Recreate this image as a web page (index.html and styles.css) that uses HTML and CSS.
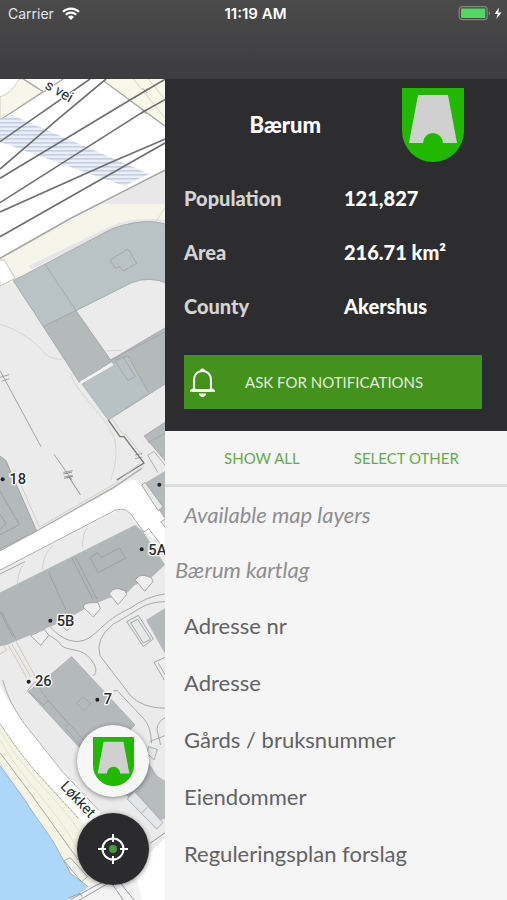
FILE: index.html
```html
<!DOCTYPE html>
<html lang="en">
<head>
<meta charset="utf-8">
<meta name="viewport" content="width=device-width, initial-scale=1">
<title>Bærum</title>
<link rel="stylesheet" href="styles.css">
</head>
<body>
<svg class="defs" aria-hidden="true">
  <symbol id="crest" viewBox="0 0 62 74">
    <path fill="#20b900" d="M0 0H62V43A31 31 0 0 1 0 43Z"/>
    <path fill="#d0d0d1" d="M16 7H46L55 55H41A10 10 0 0 0 21 55H7Z"/>
  </symbol>
</svg>
<div class="app">
  <header class="topbar">
    <div class="status">
      <div class="status-left">
        <span>Carrier</span>
        <svg class="wifi" viewBox="0 0 18 13" aria-hidden="true">
          <g fill="none" stroke="#fff" stroke-width="2.2">
            <path d="M1 4.8A11.5 11.5 0 0 1 17 4.8"/>
            <path d="M3.8 7.8A7.5 7.5 0 0 1 14.2 7.8"/>
          </g>
          <path fill="#fff" d="M9 13L6 10A4.4 4.4 0 0 1 12 10Z"/>
        </svg>
      </div>
      <time class="clock">11:19 AM</time>
      <div class="status-right">
        <svg class="battery" viewBox="0 0 44 15" aria-hidden="true">
          <rect x=".7" y=".7" width="28" height="13" rx="3" fill="none" stroke="#858587" stroke-width="1.2"/>
          <rect x="2.5" y="2.5" width="24.4" height="9.4" rx="1" fill="#4fd964"/>
          <path d="M30.3 5v4.500q1.500-.6 1.500-2.200T30.300 5Z" fill="#858587"/>
          <path d="M40.500 1.500L36 8h3.200l-1.400 5L43 6.500h-3.300Z" fill="#fff"/>
        </svg>
      </div>
    </div>
  </header>
  <main class="content">
    <section class="map" aria-label="Map">
      <svg class="map-canvas" viewBox="0 0 495 2463" preserveAspectRatio="xMinYMin slice">
        <defs>
          <pattern id="hatch" width="12" height="12" patternUnits="userSpaceOnUse">
            <rect width="12" height="12" fill="#eaeef6"/>
            <rect width="12" height="5" fill="#c3d0e8"/>
          </pattern>
        </defs>
        <rect width="600" height="2500" fill="#ebebeb"/>

        <!-- railway -->
        <g transform="translate(0 -27)" fill="none" stroke-width="2">
          <path fill="#fff" d="M0 0H500V298L0 565Z"/>
          <path fill="#f6f6ea" stroke="#b9b9ac" d="M0 80Q30 75 58 27L70 27L128 64L0 150Z"/>
          <path fill="#f8f8e9" d="M312 34L320 20H500V172Z"/>
          <path stroke="#a9aaa3" stroke-width="4" d="M70 27L128 64M0 150L190 27M312 34L500 172"/>
          <path stroke="#c4c4b8" d="M400 27L500 150M440 20L500 95"/>
          <path fill="url(#hatch)" d="M0 147L36 135L448 312L372 348L0 216Z"/>
          <path stroke="#6e6f70" stroke-width="5" d="M0 215L270 27M0 297L180 142L318 27M0 325L385 93L500 25M0 398L430 125L500 86M0 426L330 278L500 205M0 500L500 216"/>
          <path fill="#e8e8e9" d="M500 300L300 408H500Z"/>
          <path fill="#f5f5e9" d="M0 567L310 403H500V470L340 478L60 625L30 640L0 570Z"/>
          <path stroke="#e4e5e8" stroke-width="12" d="M90 592L335 474Q400 446 500 456"/>
          <path stroke="#a5a6a5" stroke-width="5" d="M0 565L210 446L500 298"/>
          <path stroke="#cacabf" d="M468 455L500 405"/>
          <g stroke="#666" stroke-width="2"><path d="M428 55l14 14m-14 0l14-14M425 118l14 14m-14 0l14-14"/></g>
          <text class="map-street" transform="translate(132 54) rotate(30)">s vei</text>
        </g>

        <!-- quarter south of the railway -->
        <g transform="translate(0 543)" fill="none" stroke="#a0a3a4" stroke-width="2.500">
          <path fill="#fff" stroke="#b5b5ad" d="M-5 0H13L45 55L0 78Z"/>
          <path fill="#b9c2c5" d="M40 62L335 -93Q400 -118 460 -115L505 -106V72Q450 46 395 68L228 152L130 200Z"/>
          <path fill="#b4b9ba" d="M130 200L228 152L332 300L505 198V366L325 480L246 372L340 314L334 305L238 367Z"/>
          <path fill="#b8c1c4" stroke="none" d="M348 304L385 288L444 396L325 480L246 372Z"/>
          <path stroke="#f3f3f3" stroke-width="8" d="M242 368L338 312"/>
          <path d="M135 12L228 152M332 300L500 213M345 300L384 288L444 396M345 303L384 362L406 350L370 292"/>
          <path d="M330 0L384 -33L410 10L370 33L360 20L346 24Z"/>
          <path stroke="#d0d0ce" d="M0 193C50 205 110 248 130 275Q145 298 188 298M318 273Q350 270 365 272M215 340C210 380 330 480 345 540Q355 600 332 660"/>
          <path stroke="#929494" d="M0 332L123 560M162 583L216 660M0 352l28-8M4 364l24-8M190 637l28-5M192 651l26-5M405 585l22-5M405 596l22-5"/>
          <path fill="#b4b9ba" d="M432 528L500 484V608Z"/>
          <path d="M444 548L500 518M443 586L462 574L500 622M443 586L474 638"/>
          <path stroke="#79776f" stroke-width="4" d="M325 480L360 530H372L432 609L350 660"/>
          <path stroke="#c9c8c0" d="M335 475L366 520L378 524L425 585M432 620L365 665"/>
        </g>

        <!-- crossroad and block 5 -->
        <g transform="translate(0 1173)" fill="none" stroke="#989b9c" stroke-width="2.500">
          <path fill="#b4babb" d="M-5 -46L18 -28L110 183L-5 240Z"/>
          <path d="M0 63L58 164L0 194M0 133L18 160L0 178"/>
          <path stroke="#c8c8c5" d="M43 0L118 171L340 44L420 -20"/>
          <path stroke="#77797a" d="M206 20L241 74M190 12l26-6M193 25l26-6"/>
          <path fill="#fff" stroke="none" d="M-5 246L110 184L345 55Q400 14 420 40L450 82L500 155V235L435 185L405 155Q385 115 355 120L0 300Z"/>
          <path stroke="#acaea9" stroke-width="4" d="M0 242L110 183L340 53L425 -5"/>
          <path d="M-5 303L345 121Q382 106 405 150L432 186L446 176L495 240M0 312L75 275"/>
          <path fill="#b4babb" stroke="none" d="M425 45L500 0V155L440 65Z"/>
          <path fill="#e6e8e7" d="M425 45L435 37L490 111L474 122ZM500 145L482 155L500 178"/>
          <path stroke="#cacbc9" d="M248 232Q248 185 262 175M128 300Q126 255 160 225M52 342Q56 300 68 288"/>
          <path fill="#b1b7b7" stroke="none" d="M-5 370L405 165L428 183L495 284L455 322L404 346L380 370L325 385L278 404L185 455L150 470L20 525L-5 530Z"/>
          <path d="M215 263L280 391M226 260L291 387M146 307L198 420M0 425L38 500M5 425L48 508M270 264L292 248L304 262L359 234L377 264L295 308Z"/>
          <g fill="#eeefee">
            <path d="M250 412Q252 398 275 398H294L301 416L280 441ZM328 372Q335 355 356 356L376 363L380 374L354 404ZM406 330Q415 315 432 316L454 323L459 335L434 364ZM183 465L212 458L218 465L201 482ZM92 497L133 478L147 496L122 526Z"/>
          </g>
          <path d="M150 470Q210 535 265 505C310 475 315 450 390 415Q440 378 500 371M148 496Q175 510 188 530C220 545 245 535 270 565Q300 600 280 618"/>
          <path d="M500 395C430 395 420 420 340 462Q285 505 300 557L390 675Q425 715 500 715"/>
          <path fill="#e6e8e8" d="M380 455L415 436L460 507L430 530ZM392 459L413 448L452 508L430 519Z"/>
          <path fill="#b4babb" stroke="none" d="M438 450L500 412V560Z"/>
          <path d="M462 577L500 560M462 577L493 630M475 580L500 622"/>
          <path stroke="#c9c1ae" d="M25 526L90 640M35 522L98 630M48 515L106 620M0 552L20 540L12 528"/>
        </g>

        <!-- quay, water and block 7 -->
        <g transform="translate(0 1803)" fill="none" stroke="#a0a3a4" stroke-width="2.500">
          <path fill="#fff" stroke="none" d="M-5 5L20 55L80 135L190 275L290 385L400 565L500 470V670H200L-5 140Z"/>
          <path fill="#ebebeb" stroke="none" d="M8 0L100 -10L250 120L500 330V460L420 515L300 395L170 250L72 130Q25 65 8 0Z"/>
          <path d="M8 0Q25 65 72 130L190 278L295 390"/>
          <path fill="#b4babb" stroke="#a5a9aa" d="M150 -15L215 -70L405 135L385 155L500 335V395L455 420L250 215L85 35Z"/>
          <path d="M82 33L105 5L145 62L130 75ZM130 75L145 62L205 132L195 143L240 195M230 70L250 50L273 71L251 91ZM145 62L265 195"/>
          <path stroke="#999d9e" d="M340 32H352L430 115Q452 135 455 190M448 185L500 165M500 110Q460 130 475 165L482 195"/>
          <path fill="#b7bcbe" stroke="none" d="M410 330L460 280L500 305V415L480 420Z"/>
          <path fill="#e4e6e7" d="M382 357L403 334L489 428L470 447ZM424 400L441 382M445 200L472 208L462 240L442 220Z"/>
          <path fill="#f4f4e5" stroke="none" d="M0 130L90 255L240 415L360 600L330 670H220L110 400L0 245Z"/>
          <path stroke="#75766f" stroke-width="3" stroke-dasharray="3 3" d="M0 130Q60 225 130 300L235 415"/>
          <path stroke="#deddcf" d="M0 152C90 300 170 350 235 450M0 180C80 320 170 380 250 540"/>
          <path fill="#acd7fa" stroke="#9da6aa" d="M-5 250L60 340L160 485L212 580L280 632L245 670H-5Z"/>
          <path stroke="#999b94" d="M0 218L95 345L235 540"/>
          <path fill="#f1f1ec" stroke="#999b94" d="M192 542L211 533L262 590L245 606Z"/>
          <path fill="#f3f3f3" stroke="none" d="M180 670L245 635L320 580L400 565L430 670Z"/>
          <path stroke="#85888a" d="M210 660L290 615L350 590M230 665L350 595L410 670M335 610L370 660M450 490L500 455M205 655L240 640L246 650"/>
          <text class="map-street" transform="translate(179 320) rotate(47)">Løkket</text>
        </g>

        <!-- house numbers -->
        <g fill="#222">
          <circle cx="8" cy="1201" r="6"/><circle cx="478" cy="1217" r="6"/>
          <circle cx="425" cy="1411" r="6"/><circle cx="151" cy="1625" r="6"/>
          <circle cx="86" cy="1808" r="6"/><circle cx="292" cy="1862" r="6"/>
        </g>
        <g class="map-number">
          <text x="28" y="1216">18</text>
          <text x="445" y="1427">5A</text>
          <text x="170" y="1640">5B</text>
          <text x="105" y="1822">26</text>
          <text x="311" y="1876">7</text>
        </g>
      </svg>
      <div class="map-actions">
        <button class="round round-light" type="button" aria-label="Municipality">
          <svg class="round-crest" aria-hidden="true"><use href="#crest"/></svg>
        </button>
        <button class="round round-dark" type="button" aria-label="My location">
          <svg class="locate" viewBox="0 0 30 30" aria-hidden="true">
            <g fill="none" stroke="#fff" stroke-width="2"><circle cx="15" cy="15" r="10.500"/><path d="M15 0V8M15 22V30M0 15H8M22 15H30"/></g>
            <circle cx="15" cy="15" r="4" fill="#459c3c"/>
          </svg>
        </button>
      </div>
    </section>

    <aside class="panel">
      <section class="info">
        <div class="info-head">
          <h1 class="name">Bærum</h1>
          <svg class="crest" aria-hidden="true"><use href="#crest"/></svg>
        </div>
        <dl class="facts">
          <dt>Population</dt><dd>121,827</dd>
          <dt>Area</dt><dd>216.71 km²</dd>
          <dt>County</dt><dd>Akershus</dd>
        </dl>
        <button class="notify" type="button">
          <svg class="bell" viewBox="0 0 26 30" aria-hidden="true">
            <path fill="none" stroke="#fff" stroke-width="2.200" stroke-linejoin="round" d="M1.500 23.200H24.500M4.200 22.800V12.500C4.200 6.500 8 3 13 3S21.800 6.500 21.800 12.500V22.800"/>
            <path fill="#fff" d="M0 24.500V23L4 20.500V22H22V20.500L26 23V24.500ZM10.500 3A2.500 2.500 0 0 1 15.500 3ZM9 26.500H17Q16 30 13 30T9 26.500Z"/>
          </svg>
          <span>ASK FOR NOTIFICATIONS</span>
        </button>
      </section>
      <div class="tools">
        <button type="button">SHOW ALL</button>
        <button type="button">SELECT OTHER</button>
      </div>
      <section class="layers">
        <h2 class="layers-title">Available map layers</h2>
        <h3 class="layers-group">Bærum kartlag</h3>
        <ul class="layer-list">
          <li><button type="button">Adresse nr</button></li>
          <li><button type="button">Adresse</button></li>
          <li><button type="button">Gårds / bruksnummer</button></li>
          <li><button type="button">Eiendommer</button></li>
          <li><button type="button">Reguleringsplan forslag</button></li>
        </ul>
      </section>
    </aside>
  </main>
</div>
</body>
</html>
```
FILE: styles.css
```css
* { box-sizing: border-box; }

body {
  margin: 0;
  font-family: Lato, "Open Sans", sans-serif;
  color: #626264;
  background: #f5f5f5;
}

h1, h2, h3, dl, dd, ul { margin: 0; padding: 0; }

button {
  border: 0;
  padding: 0;
  background: none;
  font: inherit;
  color: inherit;
  cursor: pointer;
}

.defs { position: absolute; width: 0; height: 0; }

.app {
  display: flex;
  flex-direction: column;
  min-height: 100vh;
}

.topbar {
  height: 79px;
  background: linear-gradient(#4a4a4b, #3d3d3f);
}

.status {
  display: grid;
  grid-template-columns: 1fr auto 1fr;
  align-items: center;
  height: 27px;
  padding: 0 4px 0 8px;
  font-family: Inter, "Liberation Sans", sans-serif;
  font-size: 14px;
  color: #e4e4e5;
}

.status-left { display: flex; align-items: center; gap: 8px; }
.status-right { display: flex; justify-content: flex-end; }
.clock { font-size: 15px; font-weight: 600; color: #fff; }
.wifi { width: 18px; height: 13px; }
.battery { width: 45px; height: 15px; }

.content {
  flex: 1;
  display: grid;
  grid-template-columns: minmax(0, 165fr) minmax(0, 342fr);
}

.map {
  position: relative;
  overflow: hidden;
  background: #ebebeb;
}

.map-canvas {
  position: absolute;
  inset: 0;
  width: 100%;
  height: 100%;
}

.map-number, .map-street {
  font-family: Roboto, "Liberation Sans", sans-serif;
  font-size: 44px;
  fill: #2c2c2c;
  stroke: #fff;
  stroke-width: 8px;
  stroke-linejoin: round;
  paint-order: stroke;
}

.map-number { font-weight: 500; }

.map-actions {
  position: absolute;
  right: 16px;
  bottom: 15px;
  display: flex;
  flex-direction: column;
  gap: 16px;
}

.round {
  display: grid;
  place-items: center;
  width: 72px;
  height: 72px;
  border-radius: 50%;
  box-shadow: 0 1px 5px rgba(0, 0, 0, .45);
}

.round-light { background: #f6f6f6; }
.round-dark { background: #2b2b2d; }
.round-crest { width: 41px; height: 49px; }
.locate { width: 30px; height: 30px; }

.panel { background: #f5f5f5; }

.info {
  padding: 0 25px 22px 19px;
  background: #2d2d2f;
  color: #fff;
}

.info-head {
  display: grid;
  grid-template-columns: 2fr 1fr;
  align-items: center;
  justify-items: center;
  height: 92px;
  padding-left: 3px;
}

.name { font-size: 22px; line-height: 24px; font-weight: 900; }
.crest { width: 62px; height: 74px; }

.facts {
  display: grid;
  grid-template-columns: 160fr 138fr;
  grid-auto-rows: 54px;
  align-items: center;
  padding-bottom: 22px;
  font-size: 20px;
  line-height: 26px;
  font-weight: 900;
}

.facts dt { color: #d4d4d5; }

.notify {
  display: flex;
  align-items: center;
  width: 100%;
  height: 54px;
  padding-left: 6px;
  gap: 30px;
  background: #42921c;
  color: #e0efd9;
  font-size: 15px;
}

.bell { width: 25px; height: 29px; }

.tools {
  display: flex;
  justify-content: center;
  gap: 54px;
  height: 56px;
  padding-left: 11px;
  border-bottom: 3px solid #dcdcde;
  font-size: 15px;
  color: #62ad48;
}

.layers { font-size: 22px; line-height: 57px; }

.layers-title, .layers-group {
  font-size: 22px;
  font-weight: 400;
  font-style: italic;
  line-height: 55px;
  color: #8e8e90;
}

.layers-title { padding-left: 19px; }
.layers-group { padding-left: 10px; }
.layer-list { list-style: none; }

.layer-list button {
  display: block;
  width: 100%;
  padding-left: 19px;
  text-align: left;
}
```
